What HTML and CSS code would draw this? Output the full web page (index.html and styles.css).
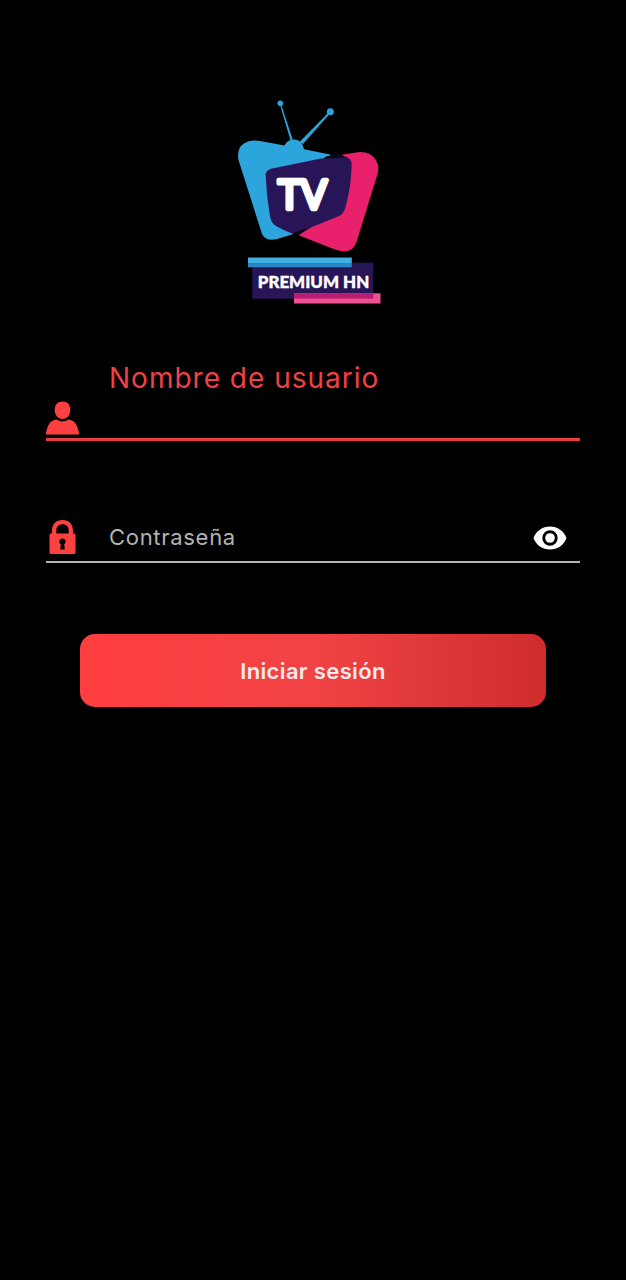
FILE: index.html
```
<!DOCTYPE html>
<html lang="es">
<head>
    <meta charset="UTF-8">
    <meta name="viewport" content="width=device-width, initial-scale=1.0">
    <title>TV Premium HN</title>
    <link rel="stylesheet" href="styles.css">
</head>
<body>
    <div class="container">
        <svg class="logo" viewBox="0 0 150 210" role="img" aria-label="TV Premium HN">
            <!-- Antenna -->
            <g fill="#2ba5dc">
                <circle cx="45.3" cy="5.2" r="2.8"/>
                <circle cx="95.3" cy="13.7" r="3.5"/>
                <path d="M44.8 6 L46 6 L58.5 44 L56 44 Z"/>
                <path d="M95 13 L96 14.5 L68 46 L64.5 44 Z"/>
            </g>
            <!-- TV body -->
            <path fill="#e9206b" d="M99 58 L121 54.5 Q134 52.500 140 61 Q145 68 142.5 76 L121.5 144 Q118 155 106 153 Q101 152 96 150 L63 137 L75 127 Z"/>
            <path fill="#2ba5dc" d="M3.5 62 Q1.5 50 9 45.5 Q15 41.5 25 43 L49.5 47.5 Q52 41.500 59 41.500 Q67 41.500 69 51.3 L95 56.5 L96 60 L45 80 L58.5 136 L42 141 Q31 144 27 136 Z"/>
            <path fill="#281558" d="M30.7 78 Q30 72.5 36 70.7 L86 60.5 L109 59 Q117 59.5 116.7 67 Q116 90 110.5 109 Q109 116 103 118.5 L77 129 L57 135.5 Q48 132 41 128 Q36 125 35 118 Q31.5 99 30.7 78 Z"/>
            <path fill="#0b0718" d="M91 58.5 L104 55.8 L114 60.5 L109 59.5 L88 61 Z"/>
            <path fill="#0b0718" d="M57 135.5 L77 128.5 L64 137 Z"/>
            <text class="logo-tv" x="43" y="110.500" textLength="49" lengthAdjust="spacingAndGlyphs">TV</text>
            <!-- Name plate -->
            <rect x="17.3" y="164.7" width="121" height="36" fill="#281558"/>
            <rect x="13" y="159.5" width="103.8" height="5.5" fill="#42afe1"/>
            <rect x="13" y="165" width="103.8" height="4.3" fill="#2986c5"/>
            <rect x="59" y="195.3" width="86.5" height="10.2" fill="#ec5292"/>
            <rect x="59" y="195.3" width="79.3" height="5.3" fill="#b91c70"/>
            <text class="logo-name" x="22.8" y="189.6" textLength="111.5" lengthAdjust="spacingAndGlyphs">PREMIUM HN</text>
        </svg>

        <form class="login">
            <div class="field field-user">
                <svg class="icon" viewBox="0 0 34 34">
                    <path d="M16.5 .5 C22 .5 24.3 4.5 24.3 9 C24.3 14 21 18 16.5 18 C12 18 8.7 14 8.7 9 C8.7 4.5 11 .5 16.5 .5 Z"/>
                    <path d="M10.5 18.5 Q16.5 22.5 22.5 18.5 C28.5 20 30.5 21.5 33 31.5 Q33.5 33.5 32 33.5 H1 Q-.5 33.5 0 31.5 C2.5 21.5 4.5 20 10.5 18.5 Z"/>
                </svg>
                <label for="username">Nombre de usuario</label>
                <input type="text" id="username">
            </div>

            <div class="field field-password">
                <svg class="icon" viewBox="0 0 34 34">
                    <path fill-rule="evenodd" d="M6 13.5 V10.5 C6 4 10.5 0 16.5 0 C22.5 0 27 4 27 10.5 V13.5 H28 Q29.500 13.5 29.5 15 V32.5 Q29.5 34 28 34 H5 Q3.5 34 3.5 32.5 V15 Q3.5 13.5 5 13.5 Z M10.3 13.5 H22.7 V10.5 C22.7 6.8 20.5 4.3 16.5 4.3 C12.5 4.3 10.3 6.8 10.3 10.5 Z M16.5 18.5 C12.8 18.5 12.5 22.5 14.8 24.5 L14.2 29.5 H18.8 L18.2 24.5 C20.5 22.5 20.2 18.5 16.5 18.5 Z"/>
                </svg>
                <input type="password" id="password" placeholder="Contraseña" aria-label="Contraseña">
                <svg class="eye" viewBox="0 0 34 24">
                    <path fill-rule="evenodd" d="M17 .5 C9.5 .5 3 5 .5 12 C3 19 9.5 23.5 17 23.5 C24.5 23.5 31 19 33.5 12 C31 5 24.5 .5 17 .5 Z M17 4.3 A7.7 7.7 0 1 1 17 19.7 A7.7 7.7 0 1 1 17 4.3 Z"/>
                    <circle cx="17" cy="12" r="4.8"/>
                </svg>
            </div>

            <button type="button">Iniciar sesión</button>
        </form>
    </div>
</body>
</html>
```
FILE: styles.css
```
* {
    box-sizing: border-box;
}

body {
    margin: 0;
    min-height: 100vh;
    background-color: #000;
    font-family: Inter, Roboto, sans-serif;
}

.container {
    display: flex;
    flex-direction: column;
    padding: 98px 46px 0;
}

.logo {
    width: 150px;
    height: 210px;
    margin-left: 189px;
}

.logo-tv {
    font-family: Lato, sans-serif;
    font-size: 41px;
    font-weight: 400;
    fill: #fff;
    stroke: #fff;
    stroke-width: 4.5px;
    stroke-linejoin: round;
}

.logo-name {
    font-family: Lato, sans-serif;
    font-size: 16.5px;
    font-weight: 900;
    fill: #fff;
    stroke: #fff;
    stroke-width: 0.4px;
}

.login {
    display: flex;
    flex-direction: column;
    margin-top: 53px;
}

.field {
    display: grid;
    grid-template-columns: 34px 1fr auto;
    column-gap: 29px;
    fill: #ff4040;
}

.field-user {
    grid-template-rows: 40px 36px;
    height: 80px;
    border-bottom: 3px solid #e93d40;
}

.field-user .icon {
    grid-row: 2;
}

.field-user label {
    grid-column: 2;
    grid-row: 1;
    line-height: 34px;
    font-size: 28px;
    letter-spacing: 1px;
    color: #f04146;
}

.field-user input {
    grid-column: 2;
    grid-row: 2;
}

.field-password {
    align-items: center;
    height: 43px;
    margin-top: 79px;
    padding-bottom: 7px;
    border-bottom: 2px solid #b5b5b5;
}

.icon {
    width: 34px;
    height: 34px;
}

.eye {
    width: 34px;
    height: 24px;
    margin: 1px 13px 0 0;
    fill: #fff;
}

input {
    width: 100%;
    height: 34px;
    padding: 0;
    border: none;
    outline: none;
    background: none;
    color: #fff;
    font-family: inherit;
    font-size: 22px;
    letter-spacing: 0.7px;
}

input::placeholder {
    color: #b3b3b3;
    opacity: 1;
}

button {
    height: 73px;
    margin: 71px 34px 0;
    padding: 0;
    border: none;
    border-radius: 15px;
    background: linear-gradient(to right, #ff3d3f, #f14344 50%, #cf2c2e);
    color: #fbeaea;
    font-family: inherit;
    font-size: 22px;
    font-weight: 600;
    letter-spacing: 0.35px;
    cursor: pointer;
}
```
